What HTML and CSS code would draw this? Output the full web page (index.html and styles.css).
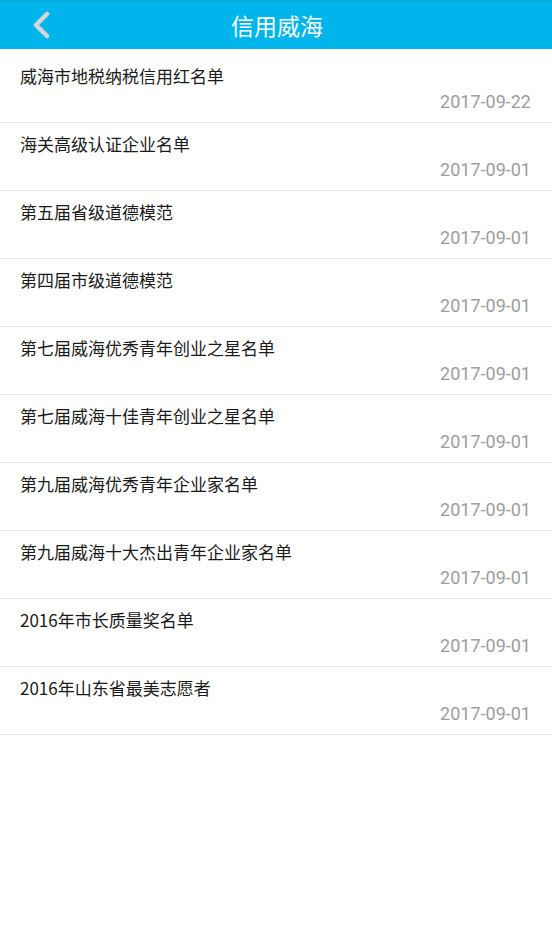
FILE: index.html
```html
<!DOCTYPE html>
<html lang="zh">
<head>
<meta charset="utf-8">
<title>信用威海</title>
<link rel="stylesheet" href="styles.css">
</head>
<body>
<header class="bar">
  <span class="back">
    <svg width="20" height="28" viewBox="0 0 20 28"><path d="M16 3 L5 14 L16 25" fill="none" stroke="#d6d6d6" stroke-width="4.5" stroke-linecap="round" stroke-linejoin="round"/></svg>
  </span>
  <h1 class="title">信用威海</h1>
</header>
<ul class="list">
  <li class="item"><div class="name">威海市地税纳税信用红名单</div><div class="date">2017-09-22</div></li>
  <li class="item"><div class="name">海关高级认证企业名单</div><div class="date">2017-09-01</div></li>
  <li class="item"><div class="name">第五届省级道德模范</div><div class="date">2017-09-01</div></li>
  <li class="item"><div class="name">第四届市级道德模范</div><div class="date">2017-09-01</div></li>
  <li class="item"><div class="name">第七届威海优秀青年创业之星名单</div><div class="date">2017-09-01</div></li>
  <li class="item"><div class="name">第七届威海十佳青年创业之星名单</div><div class="date">2017-09-01</div></li>
  <li class="item"><div class="name">第九届威海优秀青年企业家名单</div><div class="date">2017-09-01</div></li>
  <li class="item"><div class="name">第九届威海十大杰出青年企业家名单</div><div class="date">2017-09-01</div></li>
  <li class="item"><div class="name">2016年市长质量奖名单</div><div class="date">2017-09-01</div></li>
  <li class="item"><div class="name">2016年山东省最美志愿者</div><div class="date">2017-09-01</div></li>
</ul>
</body>
</html>
```
FILE: styles.css
```css
* { box-sizing: border-box; }
html, body { margin: 0; padding: 0; background: #fff; }
body { width: 552px; height: 952px; font-family: Roboto, "Noto Sans CJK SC", sans-serif; }
.bar {
  height: 49px;
  background: #00b5ec;
  border-top: 1px solid #0aa6d8;
  display: flex;
  align-items: center;
  justify-content: center;
  position: relative;
}
.back {
  position: absolute;
  left: 31px;
  top: 10px;
  display: flex;
}
.title {
  margin: 0 0 0 2px;
  color: #fff;
  font-size: 23px;
  font-weight: normal;
  font-family: "Noto Sans CJK SC", sans-serif;
  line-height: 28px;
}
.list { list-style: none; margin: 0; padding: 6px 0 0; }
.item {
  height: 68px;
  padding: 9px 21px 0 20px;
  border-bottom: 1px solid #e8e8e8;
}
.name {
  font-family: "Noto Sans CJK SC", sans-serif;
  font-size: 17px;
  line-height: 24px;
  color: #1a1a1a;
}
.date {
  margin-top: 4px;
  text-align: right;
  font-family: Roboto, sans-serif;
  font-size: 18px;
  line-height: 20px;
  color: #9d9d9d;
}
```
